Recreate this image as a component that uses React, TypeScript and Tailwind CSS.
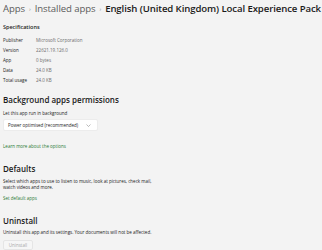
import React from "react";

const font = { fontFamily: '"Segoe UI", "Open Sans", "Noto Sans", sans-serif' };

function Row({ label, value }: { label: string; value: string }) {
  return (
    <div className="flex h-[10px] items-center text-[4.5px]">
      <span className="w-[33px] text-[#1a1a1a]">{label}</span>
      <span className="text-[#6b6b6b]">{value}</span>
    </div>
  );
}

export default function App() {
  return (
    <div className="w-[322px] h-[250px] overflow-hidden bg-[#f3f3f3] px-[3px]" style={font}>
      <div className="flex items-center h-[17px] pt-[1px] text-[9.6px] tracking-[-0.1px] whitespace-nowrap leading-none">
        <span className="text-[#5c5c5c]">Apps</span>
        <span className="text-[#8a8a8a] text-[6px] mx-[4px]">›</span>
        <span className="text-[#5c5c5c]">Installed apps</span>
        <span className="text-[#8a8a8a] text-[6px] mx-[4px]">›</span>
        <span className="text-[#1a1a1a] font-semibold">English (United Kingdom) Local Experience Pack</span>
      </div>
      <div className="mt-[6px] text-[5.5px] font-semibold text-[#1a1a1a] h-[8px] leading-[8px]">Specifications</div>
      <div className="mt-[4px]">
        <Row label="Publisher" value="Microsoft Corporation" />
        <Row label="Version" value="22621.19.126.0" />
        <Row label="App" value="0 bytes" />
        <Row label="Data" value="24.0 KB" />
        <Row label="Total usage" value="24.0 KB" />
      </div>
      <div className="mt-[10px] text-[8px] font-semibold text-[#1a1a1a] leading-[10px]">Background apps permissions</div>
      <div className="mt-[5px] text-[4.5px] text-[#1a1a1a] leading-[6px]">Let this app run in background</div>
      <div className="mt-[3px] w-[95px] h-[12px] bg-white rounded-[2px] border border-[#ececec] flex items-center justify-between px-[4px] text-[4.5px] text-[#1a1a1a]">
        <span>Power optimised (recommended)</span>
        <svg width="5" height="3" viewBox="0 0 5 3" className="mr-[2px]">
          <path d="M0.5 0.5 L2.5 2.5 L4.5 0.5" stroke="#777" strokeWidth="0.5" fill="none" />
        </svg>
      </div>
      <div className="mt-[12px] text-[4.5px] text-[#2a7a34] leading-[6px]">Learn more about the options</div>
      <div className="mt-[15px] text-[8px] font-semibold text-[#1a1a1a] leading-[10px]">Defaults</div>
      <div className="mt-[5px] text-[4.5px] text-[#1a1a1a] leading-[5.5px] w-[160px]">
        Select which apps to use to listen to music, look at pictures, check mail, watch videos and more.
      </div>
      <div className="mt-[5px] text-[4.5px] text-[#2a7a34] leading-[6px]">Set default apps</div>
      <div className="mt-[15px] text-[8px] font-semibold text-[#1a1a1a] leading-[10px]">Uninstall</div>
      <div className="mt-[3px] text-[4.5px] text-[#1a1a1a] leading-[6px]">
        Uninstall this app and its settings. Your documents will not be affected.
      </div>
      <div className="mt-[5px] w-[30px] h-[10px] rounded-[2px] border border-[#e5e5e5] bg-[#f6f6f6] flex items-center justify-center text-[4.5px] text-[#a8a8a8]">
        Uninstall
      </div>
    </div>
  );
}
